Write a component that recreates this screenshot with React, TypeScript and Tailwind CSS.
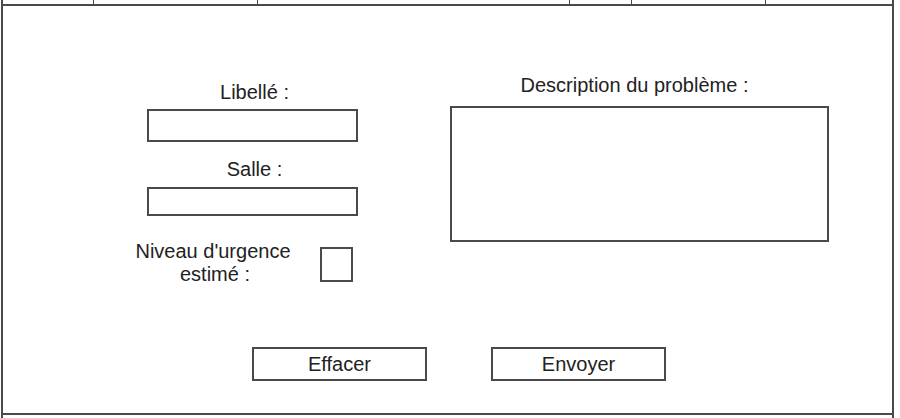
const line = "border-[#4a4a4a]";

function Field({ label, height, gap }: { label: string; height: string; gap: string }) {
  return (
    <div className="flex flex-col">
      <p className="pl-[4px] text-center text-[20px] leading-[23px] text-[#222]">{label}</p>
      <div className={`${gap} ${height} w-[211px] border-2 ${line} bg-white`} />
    </div>
  );
}

const ticks = [93, 257, 569, 631, 765];

export default function App() {
  return (
    <div
      className="relative w-[900px] h-[418px] bg-white overflow-hidden"
      style={{ fontFamily: '"Liberation Sans", Arial, sans-serif' }}
    >
      {/* page frame */}
      <div className={`ml-[1px] w-[893px] h-full border-x-2 ${line} pt-[4px]`}>
        <div className={`h-[411px] border-y-2 ${line}`}>
          <div className="flex items-start">
            {/* left column */}
            <div className="ml-[144px] mt-[75px] w-[211px] flex flex-col">
              <Field label="Libellé :" height="h-[33px]" gap="mt-[5px]" />
              <div className="mt-[16px]">
                <Field label="Salle :" height="h-[29px]" gap="mt-[6px]" />
              </div>
              <div className="mt-[24px] -ml-[14px] flex items-start">
                <p className="w-[160px] shrink-0 text-center text-[20px] leading-[23px] text-[#222]">
                  Niveau d'urgence
                  <br />
                  <span className="pl-[4px]">estimé :</span>
                </p>
                <div className={`ml-[27px] mt-[7px] w-[33px] h-[35px] border-2 ${line}`} />
              </div>
            </div>

            {/* right column */}
            <div className="ml-[92px] mt-[68px] flex flex-col">
              <p className="pr-[10px] text-center text-[20px] leading-[23px] text-[#222]">
                Description du problème :
              </p>
              <div className={`mt-[9px] w-[379px] h-[136px] border-2 ${line}`} />
            </div>
          </div>

          {/* actions */}
          <div className="mt-[61px] ml-[249px] flex gap-[64px]">
            <button
              className={`w-[175px] h-[34px] border-2 ${line} flex items-center justify-center text-[20px] leading-[23px] text-[#222]`}
            >
              Effacer
            </button>
            <button
              className={`w-[175px] h-[34px] border-2 ${line} flex items-center justify-center text-[20px] leading-[23px] text-[#222]`}
            >
              Envoyer
            </button>
          </div>
        </div>
      </div>

      {ticks.map((x) => (
        <div
          key={x}
          className="absolute top-0 h-[4px] w-[1px] bg-[#4a4a4a]"
          style={{ left: x }}
        />
      ))}
    </div>
  );
}
